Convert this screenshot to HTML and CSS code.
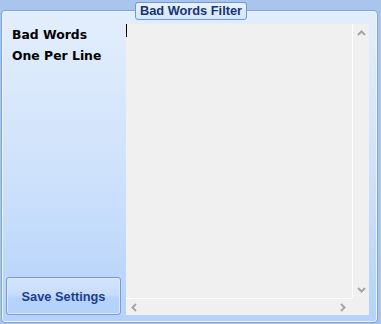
FILE: index.html
```html
<!DOCTYPE html>
<html>
<head>
  <meta charset="utf-8">
  <title>Bad Words Filter</title>
  <link rel="stylesheet" href="styles.css">
</head>
<body>

  <div class="frame">
    <div class="tab">Bad Words Filter</div>

    <div class="side">
      <div class="label">Bad Words<br>One Per Line</div>
      <button class="save">Save Settings</button>
    </div>

    <div class="editor">
      <div class="text"><span class="caret"></span></div>
      <div class="vscroll">
        <svg width="9" height="6" viewBox="0 0 9 6"><path d="M1 5 L4.5 1.5 L8 5" fill="none" stroke="#a6a6a6" stroke-width="2"/></svg>
        <svg width="9" height="6" viewBox="0 0 9 6"><path d="M1 1 L4.5 4.5 L8 1" fill="none" stroke="#a6a6a6" stroke-width="2"/></svg>
      </div>
      <div class="hscroll">
        <svg width="6" height="9" viewBox="0 0 6 9"><path d="M5 1 L1.5 4.5 L5 8" fill="none" stroke="#a6a6a6" stroke-width="2"/></svg>
        <svg width="6" height="9" viewBox="0 0 6 9"><path d="M1 1 L4.5 4.5 L1 8" fill="none" stroke="#a6a6a6" stroke-width="2"/></svg>
      </div>
      <div class="corner"></div>
    </div>
  </div>

</body>
</html>
```

FILE: styles.css
```css
body {
  margin: 0;
  background: #a9c5ee;
  font-family: "Liberation Sans", Arial, sans-serif;
  width: 381px;
  height: 324px;
  overflow: hidden;
}

.frame {
  position: relative;
  margin: 10px 0 0 1px;
  border: 1px solid #7ea4dd;
  border-radius: 4px;
  box-shadow: inset 0 0 0 1px #eef5fe;
  background: linear-gradient(to bottom, #e3eefc 0%, #cfe2fb 50%, #b4d2fb 100%);
  display: flex;
  padding: 13px 8px 7px 0;
  box-sizing: content-box;
  height: 291px;
  width: 367px;
}

.tab {
  position: absolute;
  left: 133px;
  top: -9px;
  width: 110px;
  height: 16px;
  border: 1px solid #7098d6;
  border-radius: 3px;
  background: linear-gradient(to bottom, #e9f1fd, #d6e5fb);
  color: #16366f;
  font-weight: bold;
  font-size: 12.8px;
  line-height: 16px;
  text-align: center;
}

.side {
  width: 124px;
  display: flex;
  flex-direction: column;
  justify-content: space-between;
}

.label {
  font-family: "DejaVu Sans", Verdana, sans-serif;
  font-weight: bold;
  font-size: 12.4px;
  line-height: 21px;
  color: #000;
  padding-left: 10px;
}

.save {
  margin-left: 4px;
  width: 115px;
  height: 38px;
  border: 1px solid #7d9bcc;
  border-radius: 3px;
  background: linear-gradient(to bottom, #d3e4fc 0%, #c8ddfb 45%, #b6d3fa 55%, #b3d1fa 100%);
  box-shadow: inset 0 0 0 1px #d9e8fd;
  color: #1c3f8c;
  font-family: "Liberation Sans", Arial, sans-serif;
  font-weight: bold;
  font-size: 12.8px;
  padding: 0;
}

.editor {
  flex: 1;
  background: #f0f0f0;
  display: grid;
  grid-template-columns: 1fr 17px;
  grid-template-rows: 1fr 17px;
}

.caret {
  display: block;
  width: 1px;
  height: 13px;
  background: #000;
}

.vscroll {
  border-left: 1px solid #fff;
  display: flex;
  flex-direction: column;
  justify-content: space-between;
  align-items: center;
  padding: 6px 0 5px 0;
}

.hscroll {
  border-top: 1px solid #fff;
  display: flex;
  justify-content: space-between;
  align-items: center;
  padding: 0 6px 0 5px;
}
```
